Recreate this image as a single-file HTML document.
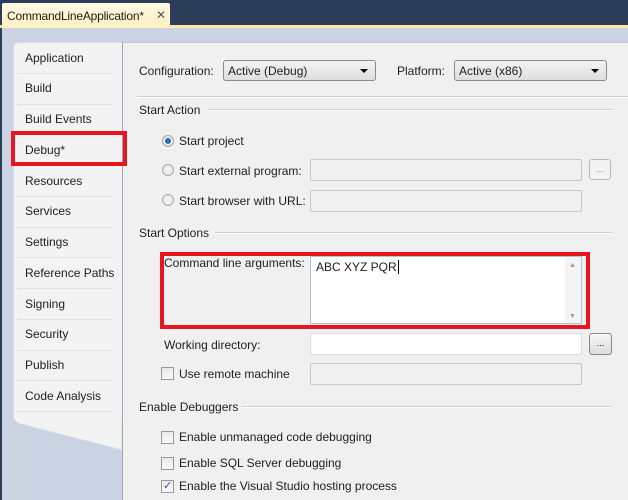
<!DOCTYPE html>
<html><head><meta charset="utf-8"><style>
*{box-sizing:border-box;margin:0;padding:0}
body{width:628px;height:500px;overflow:hidden;background:#c9d3e2;font-family:"Liberation Sans",sans-serif;font-size:12px;color:#1e1e1e;position:relative}
.a{position:absolute}
.t{position:absolute;white-space:nowrap;line-height:14px}
.navy{left:0;top:0;width:628px;height:25px;background:#2c3d5a}
.yl{left:0;top:25px;width:628px;height:3px;background:#fde9a5}
.tab{left:2px;top:3px;width:168px;height:25px;background:linear-gradient(#fff9e3,#fdefc0);border-radius:2px 2px 0 0}
.left{left:13px;top:42px;width:110px;height:375px;background:#f3f3f3;border-radius:6px 0 0 0;border-left:1px solid #d9dde6;border-top:1px solid #d9dde6}
.main{left:122px;top:42px;width:506px;height:458px;background:#f0f0f0;border-left:1px solid #a0a6b2;border-top:1px solid #c3c8d2}
.sep{position:absolute;left:17px;width:95px;height:1px;background:#e3e3e3}
.dd{position:absolute;height:21px;border:1px solid #8a8a8a;border-radius:3px;background:linear-gradient(#f4f4f4,#dedede);padding:3px 4px}
.dd:after{content:"";position:absolute;right:7px;top:8px;border-left:4px solid transparent;border-right:4px solid transparent;border-top:4px solid #000}
.hl{position:absolute;height:2px;background:#cfcfcf;border-bottom:1px solid #fff}
.tb{position:absolute;border:1px solid #c8c8c8;border-radius:2px;background:#f0f0f0}
.btn{position:absolute;border:1px solid #b8b8b8;border-radius:3px;background:#f3f3f3;font-size:9px;text-align:center;color:#999;line-height:18px}
.rad{position:absolute;width:12px;height:12px;border-radius:50%;border:1px solid #aaa;background:radial-gradient(#f8f8f8,#ddd)}
.cb{position:absolute;width:13px;height:13px;border:1px solid #999;background:linear-gradient(#e8e8e8,#fafafa)}
.red{position:absolute;border:4px solid #e8141e}
</style></head><body>
<div class="a navy"></div>
<div class="a yl"></div>
<div class="a tab"></div>
<div class="t" style="left:7px;top:9px;font-size:12px;letter-spacing:-0.2px">CommandLineApplication*</div>
<div class="t" style="left:156px;top:8px;font-size:12px;color:#555">✕</div>
<div class="a" style="left:0;top:28px;width:2px;height:472px;background:#2c3d5a"></div>

<svg class="a" style="left:13px;top:410px" width="112" height="50"><path d="M0 0 H109 V40 L8 14 Q1 12 0 6 Z" fill="#f3f3f3" stroke="#d9dde6"/></svg>
<div class="a left"></div>
<div class="sep" style="top:73px"></div><div class="sep" style="top:104px"></div><div class="sep" style="top:134px"></div><div class="sep" style="top:165px"></div><div class="sep" style="top:196px"></div><div class="sep" style="top:227px"></div><div class="sep" style="top:257px"></div><div class="sep" style="top:288px"></div><div class="sep" style="top:319px"></div><div class="sep" style="top:350px"></div><div class="sep" style="top:380px"></div><div class="sep" style="top:411px"></div>
<div class="t" style="left:25px;top:51px">Application</div>
<div class="t" style="left:25px;top:81px">Build</div>
<div class="t" style="left:25px;top:112px">Build Events</div>
<div class="t" style="left:25px;top:143px">Debug*</div>
<div class="t" style="left:25px;top:174px">Resources</div>
<div class="t" style="left:25px;top:204px">Services</div>
<div class="t" style="left:25px;top:235px">Settings</div>
<div class="t" style="left:25px;top:266px">Reference Paths</div>
<div class="t" style="left:25px;top:297px">Signing</div>
<div class="t" style="left:25px;top:327px">Security</div>
<div class="t" style="left:25px;top:358px">Publish</div>
<div class="t" style="left:25px;top:389px">Code Analysis</div>

<div class="a main"></div>
<div class="red" style="left:11px;top:131px;width:116px;height:35px"></div>

<div class="t" style="left:139px;top:64px">Configuration:</div>
<div class="dd" style="left:223px;top:60px;width:153px">Active (Debug)</div>
<div class="t" style="left:397px;top:64px">Platform:</div>
<div class="dd" style="left:454px;top:60px;width:153px">Active (x86)</div>
<div class="hl" style="left:137px;top:96px;width:491px"></div>

<div class="t" style="left:139px;top:103px">Start Action</div>
<div class="hl" style="left:208px;top:109px;width:404px"></div>
<div class="rad" style="left:162px;top:135px;background:radial-gradient(#2a7fd4 0,#1a5fa8 35%,#e8e8e8 45%)"></div>
<div class="t" style="left:179px;top:134px">Start project</div>
<div class="rad" style="left:162px;top:164px"></div>
<div class="t" style="left:179px;top:164px">Start external program:</div>
<div class="tb" style="left:310px;top:159px;width:272px;height:22px"></div>
<div class="btn" style="left:589px;top:159px;width:22px;height:21px">...</div>
<div class="rad" style="left:162px;top:194px"></div>
<div class="t" style="left:179px;top:194px">Start browser with URL:</div>
<div class="tb" style="left:310px;top:190px;width:272px;height:22px"></div>

<div class="t" style="left:139px;top:226px">Start Options</div>
<div class="hl" style="left:215px;top:232px;width:397px"></div>
<div class="red" style="left:160px;top:252px;width:430px;height:77px"></div>
<div class="t" style="left:164px;top:256px">Command line arguments:</div>
<div class="a" style="left:310px;top:256px;width:272px;height:68px;background:#fff;border:1px solid #aac4dc"></div>
<div class="a" style="left:565px;top:257px;width:16px;height:66px;background:#f4f4f4"></div>
<div class="t" style="left:569px;top:259px;font-size:7px;color:#999">▲</div>
<div class="t" style="left:569px;top:310px;font-size:7px;color:#999">▼</div>
<div class="t" style="left:316px;top:260px">ABC XYZ PQR<span style="border-left:1px solid #000;margin-left:1px"></span></div>
<div class="t" style="left:164px;top:338px">Working directory:</div>
<div class="a" style="left:310px;top:333px;width:272px;height:22px;background:#fff;border:1px solid #ddd"></div>
<div class="btn" style="left:589px;top:333px;width:23px;height:22px;border-color:#888;background:linear-gradient(#f6f6f6,#ddd);color:#000">...</div>
<div class="cb" style="left:161px;top:367px"></div>
<div class="t" style="left:179px;top:367px">Use remote machine</div>
<div class="tb" style="left:310px;top:363px;width:272px;height:22px"></div>

<div class="t" style="left:139px;top:400px">Enable Debuggers</div>
<div class="hl" style="left:242px;top:406px;width:370px"></div>
<div class="cb" style="left:161px;top:431px"></div>
<div class="t" style="left:179px;top:430px">Enable unmanaged code debugging</div>
<div class="cb" style="left:161px;top:457px"></div>
<div class="t" style="left:179px;top:456px">Enable SQL Server debugging</div>
<div class="cb" style="left:161px;top:480px"></div>
<div class="t" style="left:163px;top:479px;font-size:11px;color:#3a4ea0">✓</div>
<div class="t" style="left:179px;top:479px">Enable the Visual Studio hosting process</div>
</body></html>
